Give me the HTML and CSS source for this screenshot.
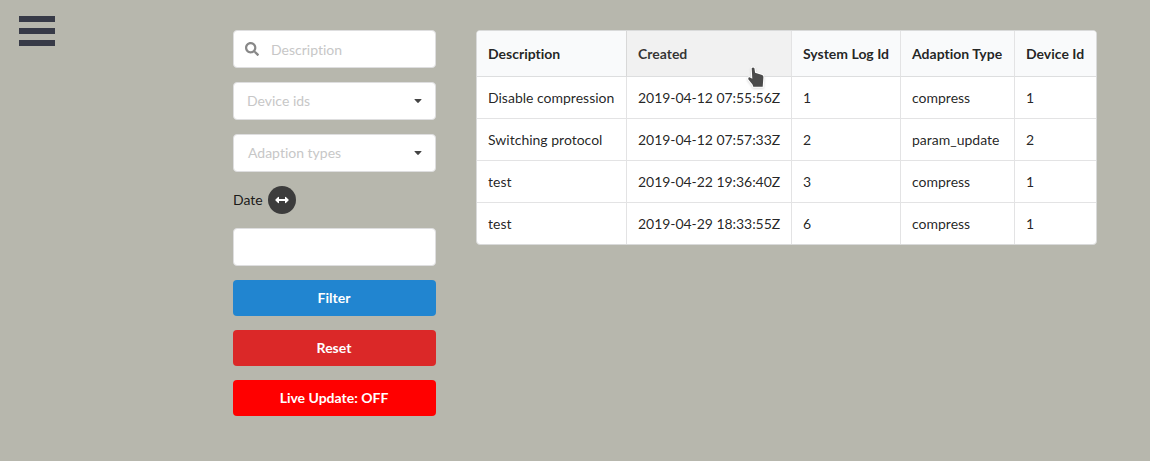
FILE: index.html
```html
<!DOCTYPE html>
<html lang="en">
<head>
<meta charset="utf-8">
<title>System log</title>
<link rel="stylesheet" href="styles.css">
</head>
<body>
<div class="page">
  <nav class="side">
    <div class="burger" role="button" aria-label="Menu"><span class="bar"></span><span class="bar"></span><span class="bar"></span></div>
  </nav>
  <form class="filters">
    <div class="field search">
      <svg class="search-icon" viewBox="0 0 512 512"><path d="M505 442.700 405.300 343c-4.500-4.500-10.600-7-17-7H372c27.600-35.300 44-79.700 44-128C416 93.100 322.900 0 208 0S0 93.100 0 208s93.100 208 208 208c48.300 0 92.700-16.400 128-44v16.300c0 6.400 2.500 12.500 7 17l99.700 99.700c9.400 9.400 24.600 9.400 33.900 0l28.300-28.300c9.400-9.400 9.400-24.600.1-34zM208 336c-70.700 0-128-57.200-128-128 0-70.700 57.200-128 128-128 70.700 0 128 57.200 128 128 0 70.700-57.200 128-128 128z"/></svg>
      <span class="placeholder">Description</span>
    </div>
    <div class="field select"><span class="placeholder">Device ids</span><svg class="caret" viewBox="0 0 8 5"><path d="M.6 0h6.800q.9.100.3.900L4.500 4.200q-.5.400-1 0L.3.900Q-.3.100.6 0z"/></svg></div>
    <div class="field select types"><span class="placeholder">Adaption types</span><svg class="caret" viewBox="0 0 8 5"><path d="M.6 0h6.800q.9.100.3.900L4.500 4.200q-.5.400-1 0L.3.900Q-.3.100.6 0z"/></svg></div>
    <div class="date"><span>Date</span>
      <span class="round"><svg class="arrows" viewBox="0 0 14 8"><path d="M4 1.300V3h6V1.300q.2-.8.900-.3l2.600 2.500q.4.500 0 1L10.900 7q-.7.500-.9-.3V5H4v1.700q-.2.800-.9.300L.5 4.500q-.4-.5 0-1L3.100 1q.7-.5.900.3z"/></svg></span>
    </div>
    <div class="field"></div>
    <button type="button" class="button blue">Filter</button>
    <button type="button" class="button red">Reset</button>
    <button type="button" class="button live">Live Update: OFF</button>
  </form>
  <table class="log">
    <colgroup><col class="c-desc"><col class="c-created"><col class="c-log"><col class="c-type"><col class="c-device"></colgroup>
    <thead><tr><th>Description</th><th class="hover">Created</th><th>System Log Id</th><th>Adaption Type</th><th>Device Id</th></tr></thead>
    <tbody>
      <tr><td>Disable compression</td><td class="stamp">2019-04-12 07:55:56Z</td><td>1</td><td>compress</td><td>1</td></tr>
      <tr><td>Switching protocol</td><td class="stamp">2019-04-12 07:57:33Z</td><td>2</td><td>param_update</td><td>2</td></tr>
      <tr><td>test</td><td class="stamp">2019-04-22 19:36:40Z</td><td>3</td><td>compress</td><td>1</td></tr>
      <tr><td>test</td><td class="stamp">2019-04-29 18:33:55Z</td><td>6</td><td>compress</td><td>1</td></tr>
    </tbody>
  </table>
</div>
<svg class="pointer" viewBox="0 0 22 24"><path d="M7.700 2.200q1.400-1.600 2.700.1l.7 4.400 7 2.200q1.300.6 1.300 1.900l-.7 10H9.300L8.500 18.500 4.300 13.300q-.5-1.900 1.300-2.100l2.700 1.500z"/></svg>
</body>
</html>
```
FILE: styles.css
```css
* { box-sizing: border-box; }
body {
  margin: 0;
  height: 461px;
  overflow: hidden;
  background: #b7b7ad;
  color: rgba(0, 0, 0, .87);
  font: 14px/20px Lato, sans-serif;
  font-variant-ligatures: none;
}
.page { display: flex; align-items: flex-start; }
.side { width: 233px; padding: 16px 19px; }
.burger { display: flex; flex-direction: column; gap: 6px; width: 36px; }
.bar { height: 6px; background: #373a47; }
.filters { display: flex; flex-direction: column; gap: 14px; width: 203px; margin: 30px 40px 0 0; }
.field {
  display: flex;
  align-items: center;
  height: 38px;
  padding: 1px 13px 0 14px;
  border: 1px solid #dededf;
  border-radius: 4px;
  background: #fff;
}
.placeholder { color: #c7c7c7; }
.search { padding-left: 11px; gap: 12px; }
.search-icon { width: 14px; height: 14px; margin-top: -2px; fill: #888; }
.select { justify-content: space-between; padding: 0 14px 1px 13px; }
.types { padding-left: 14px; }
.caret { width: 8px; height: 4.500px; margin-top: 1px; margin-right: -.5px; fill: #444; }
.date { display: flex; align-items: center; gap: 5px; height: 28px; }
.round {
  display: flex;
  align-items: center;
  justify-content: center;
  width: 28px;
  height: 28px;
  border-radius: 50%;
  background: #3c3c3c;
}
.arrows { width: 14px; height: 8px; fill: #fff; }
.button {
  height: 36px;
  padding: 0 1px 0 0;
  border: 0;
  border-radius: 4px;
  color: #fff;
  font: bold 14px/14px Lato, sans-serif;
}
.blue { background: #2185d0; }
.red { background: #db2828; }
.live { background: #f00; }
.log {
  width: 621px;
  margin-top: 30px;
  table-layout: fixed;
  border: 1px solid #d9dada;
  border-radius: 4px;
  border-collapse: separate;
  border-spacing: 0;
  overflow: hidden;
  background: #fff;
}
.c-desc { width: 149px; }
.c-created { width: 165px; }
.c-log { width: 109px; }
.c-type { width: 114px; }
.c-device { width: 82px; }
.log th, .log td {
  padding: 0 11px;
  border-left: 1px solid #e3e3e4;
  border-bottom: 1px solid #e3e3e4;
  text-align: left;
  white-space: nowrap;
}
.log th:first-child, .log td:first-child { border-left: 0; }
.log th { height: 46px; background: #f9fafb; border-bottom-color: #dddedf; }
.log .hover { background: #f1f1f1; color: rgba(0, 0, 0, .8); border-left-color: #d8d8d8; }
.log td { height: 42px; }
.log .stamp { letter-spacing: -.05px; }
.log tr:last-child td { height: 41px; border-bottom: 0; }
.log thead tr:last-child th { height: 46px; }
.pointer {
  position: absolute;
  left: 744px;
  top: 66px;
  width: 22px;
  height: 24px;
  overflow: visible;
  fill: #4b4b4b;
  stroke: #fff;
  stroke-width: 2px;
  paint-order: stroke;
  filter: drop-shadow(0 1px 1px rgba(0, 0, 0, .15));
}
```
